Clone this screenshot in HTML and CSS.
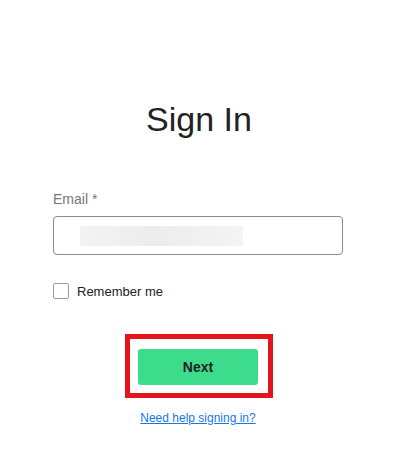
FILE: index.html
```html
<!DOCTYPE html>
<html lang="en">
<head>
<meta charset="utf-8">
<title>Sign In</title>
<link rel="stylesheet" href="styles.css">
</head>
<body>
<main class="form">
  <h1 class="title">Sign In</h1>
  <label class="label">Email *</label>
  <div class="input"><span class="redacted"></span></div>
  <label class="remember"><span class="checkbox"></span><span class="remember-text">Remember me</span></label>
  <div class="actions">
    <div class="highlight">
      <button class="next" type="button">Next</button>
    </div>
  </div>
  <div class="help"><a href="#" class="help-link">Need help signing in?</a></div>
</main>
</body>
</html>
```
FILE: styles.css
```css
html, body {
  margin: 0;
  padding: 0;
  background: #ffffff;
}
body {
  font-family: "Liberation Sans", Arial, sans-serif;
  color: #222222;
}
.form {
  width: 290px;
  margin-left: 53px;
  padding-top: 99px;
  display: flex;
  flex-direction: column;
}
.title {
  margin: 0;
  font-size: 34px;
  line-height: 40px;
  font-weight: 400;
  text-align: center;
  color: #222222;
  padding-left: 2px;
}
.label {
  margin-top: 50px;
  font-size: 14px;
  line-height: 20px;
  color: #777777;
}
.input {
  margin-top: 7px;
  height: 37px;
  border: 1px solid #8a8a8a;
  border-radius: 4px;
  display: flex;
  align-items: center;
  padding-left: 26px;
}
.redacted {
  width: 163px;
  height: 20px;
  background: linear-gradient(90deg, #f3f3f3 0%, #ececec 45%, #f4f4f4 100%);
  filter: blur(0.6px);
}
.remember {
  margin-top: 28px;
  display: flex;
  align-items: center;
  height: 16px;
}
.checkbox {
  width: 14px;
  height: 14px;
  border: 1px solid #9a9a9a;
  border-radius: 2px;
  background: #fff;
}
.remember-text {
  margin-left: 8px;
  font-size: 13px;
  color: #222222;
}
.actions {
  margin-top: 35px;
  display: flex;
  justify-content: center;
}
.highlight {
  border: 5px solid #e5141c;
  padding: 10px 10px 8px 8px;
  margin-left: 2px;
}
.next {
  display: block;
  width: 120px;
  height: 36px;
  border: none;
  border-radius: 3px;
  background: #3cdc8c;
  color: #222222;
  font-family: "Liberation Sans", Arial, sans-serif;
  font-size: 14px;
  font-weight: 700;
  cursor: pointer;
}
.help {
  margin-top: 13px;
  text-align: center;
  font-size: 12px;
  line-height: 14px;
}
.help-link {
  color: #1877e6;
  text-decoration: underline;
}
```
